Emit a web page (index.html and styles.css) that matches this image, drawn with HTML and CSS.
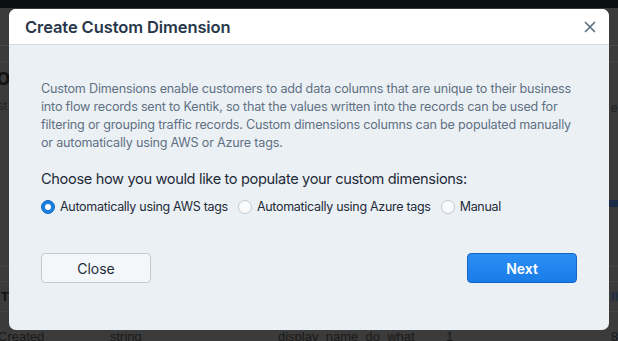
FILE: index.html
```html
<!DOCTYPE html>
<html>
<head>
<meta charset="utf-8">
<link rel="stylesheet" href="styles.css">
</head>
<body>
<div class="page">
  <div class="topbar"></div>
  <div class="content">
    <div class="row r1"></div>
    <div class="row r2"></div>
    <div class="row r3"><span class="big">o</span><span class="small">st</span><span class="small right">er</span><span class="bluebar"></span></div>
    <div class="row r4"></div>
    <div class="row r5"><span class="th">T</span><span class="th right">II</span></div>
    <div class="row r6"><span class="cell c1">Created</span><span class="cell c2">string</span><span class="cell c3">display_name_do_what</span><span class="cell c4">1</span><span class="cell c5">8</span></div>
  </div>
</div>
<div class="overlay">
  <div class="dialog">
    <div class="dialog-header">
      <h4 class="title">Create Custom Dimension</h4>
      <svg class="close-x" width="12" height="12" viewBox="0 0 12 12"><path d="M1.5 1.5L10.5 10.5M10.5 1.5L1.5 10.5" stroke="#5c7080" stroke-width="1.7" stroke-linecap="round"/></svg>
    </div>
    <div class="dialog-body">
      <p class="desc">Custom Dimensions enable customers to add data columns that are unique to their business into flow records sent to Kentik, so that the values written into the records can be used for filtering or grouping traffic records. Custom dimensions columns can be populated manually or automatically using AWS or Azure tags.</p>
      <div class="question">Choose how you would like to populate your custom dimensions:</div>
      <div class="radios">
        <label class="radio"><span class="dot checked"></span>Automatically using AWS tags</label>
        <label class="radio"><span class="dot"></span>Automatically using Azure tags</label>
        <label class="radio"><span class="dot"></span>Manual</label>
      </div>
    </div>
    <div class="dialog-footer">
      <button class="btn">Close</button>
      <button class="btn primary">Next</button>
    </div>
  </div>
</div>
</body>
</html>
```
FILE: styles.css
```css
* { box-sizing: border-box; }
html, body { margin: 0; padding: 0; }
body {
  width: 618px;
  height: 341px;
  overflow: hidden;
  font-family: Inter, "Noto Sans", sans-serif;
  background: #3a3a3a;
  position: relative;
}
.page { width: 618px; height: 341px; overflow: hidden; }
.topbar { height: 8px; background: #0c0f12; }
.content { background: #3b3b3b; }
.row { position: relative; border-bottom: 1px solid #444; }
.r1 { height: 38px; border-bottom-color: #4a4a4a; }
.r2 { height: 16px; }
.r3 { height: 205px; }
.r4 { height: 15px; }
.r5 { height: 30px; }
.r6 { height: 29px; border: none; }
.big { position: absolute; left: -4px; top: 1px; font: 700 24px "Liberation Sans", sans-serif; color: #111; }
.small { position: absolute; left: -3px; top: 36px; font: 13px "Liberation Sans", sans-serif; color: #222; }
.small.right { left: auto; right: -4px; top: 38px; }
.bluebar { position: absolute; right: 0; top: 138px; width: 14px; height: 7px; background: #1b2c48; }
.th { position: absolute; left: 1px; top: 7px; font: 700 13px "Liberation Sans", sans-serif; color: #111; }
.th.right { left: auto; right: 0; color: #1b2c48; }
.cell { position: absolute; top: 17px; font: 13px "Liberation Sans", sans-serif; color: #1a1a1a; }
.c1 { left: -2px; } .c2 { left: 110px; } .c3 { left: 278px; } .c4 { left: 446px; } .c5 { left: 611px; }

.overlay { position: absolute; inset: 0; }
.dialog {
  position: absolute;
  left: 9px; top: 9px;
  width: 600px; height: 321px;
  background: #ebf0f5;
  border-radius: 7px;
  overflow: hidden;
  display: flex;
  flex-direction: column;
}
.dialog-header {
  height: 36px;
  background: #fff;
  border-bottom: 1px solid #d6dbe0;
  display: flex;
  align-items: center;
  justify-content: space-between;
  padding: 0 8px 0 16px;
  flex-shrink: 0;
}
.title {
  margin: 0;
  font-size: 16.5px;
  font-weight: 600;
  color: #28374a;
  letter-spacing: -0.1px;
}
.close-x { margin-right: 5px; margin-top: 1px; }
.dialog-body { padding: 35px 32px 0 32px; }
.desc {
  margin: 0;
  font-size: 12.6px;
  line-height: 18px;
  letter-spacing: -0.2px;
  color: #5f7183;
}
.question {
  margin-top: 18px;
  font-size: 14.6px;
  letter-spacing: -0.35px;
  color: #1f2b38;
}
.radios { display: flex; gap: 10px; margin-top: 11px; }
.radio {
  display: flex; align-items: center; gap: 5px;
  font-size: 12.5px;
  letter-spacing: -0.3px;
  color: #1f2b38;
}
.dot {
  width: 14px; height: 14px; border-radius: 50%;
  background: #f8fafb;
  border: 1px solid #c3c9cf;
  display: inline-block;
  position: relative;
}
.dot.checked {
  background: #1b7fe0;
  border-color: #1468c4;
}
.dot.checked::after {
  content: "";
  position: absolute;
  left: 3px; top: 3px;
  width: 6px; height: 6px; border-radius: 50%;
  background: #fff;
}
.dialog-footer {
  display: flex;
  justify-content: space-between;
  padding: 0 32px;
  margin-top: 39px;
}
.btn {
  width: 110px; height: 30px;
  border-radius: 4px;
  border: 1px solid #c2c8ce;
  background: #f4f7f9;
  font-family: Inter, "Noto Sans", sans-serif;
  font-size: 14px;
  color: #1f2b38;
}
.btn.primary {
  background: linear-gradient(#2b8ef5, #1a7ce8);
  border-color: #1664c2;
  color: #fff;
  font-weight: 600;
}
```
